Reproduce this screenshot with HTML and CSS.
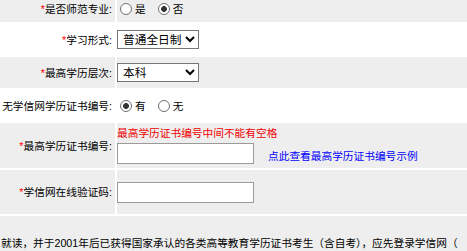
FILE: index.html
```html
<html>
<head>
<meta charset="utf-8">
<link rel="stylesheet" href="styles.css">
</head>
<body>
<form class="regform">
	<div class="lbl gray"><span><em class="req">*</em>是否师范专业:</span></div>
	<div class="val gray">
		<label class="opt"><input type="radio" name="shifan">是</label>
		<label class="opt"><input type="radio" name="shifan" checked>否</label>
	</div>

	<div class="lbl"><span><em class="req">*</em>学习形式:</span></div>
	<div class="val">
		<select class="pick" name="xxxs">
			<option>普通全日制</option>
			<option>成人教育</option>
			<option>自学考试</option>
		</select>
	</div>

	<div class="lbl gray"><span><em class="req">*</em>最高学历层次:</span></div>
	<div class="val gray">
		<select class="pick" name="xlcc">
			<option>本科</option>
			<option>专科</option>
			<option>研究生</option>
		</select>
	</div>

	<div class="lbl"><span>无学信网学历证书编号:</span></div>
	<div class="val">
		<label class="opt"><input type="radio" name="xxw" checked>有</label>
		<label class="opt"><input type="radio" name="xxw">无</label>
	</div>

	<div class="lbl gray"><span><em class="req">*</em>最高学历证书编号:</span></div>
	<div class="val gray stack">
		<div class="warn">最高学历证书编号中间不能有空格</div>
		<div class="line">
			<input type="text" class="box" name="zsbh">
			<a class="sample" href="#">点此查看最高学历证书编号示例</a>
		</div>
	</div>

	<div class="lbl gray"><span><em class="req">*</em>学信网在线验证码:</span></div>
	<div class="val gray">
		<input type="text" class="box" name="yzm">
	</div>

	<div class="note gray">就读，并于2001年后已获得国家承认的各类高等教育学历证书考生（含自考），应先登录学信网（</div>
</form>
</body>
</html>
```

FILE: styles.css
```css
body {
	margin: 0;
	background: #fff;
	font-family: "Liberation Sans", "Noto Sans CJK SC", sans-serif;
	font-size: 10.7px;
	color: #000;
	overflow: hidden;
}

.regform {
	display: grid;
	grid-template-columns: 115px 1fr;
	grid-template-rows: 27px 31px 31px 31px 45px 44px auto;
	gap: 2px;
	margin-top: -5px;
	background: #fff;
}

.gray {
	background: #eeeeee;
}

.lbl {
	display: flex;
	justify-content: flex-end;
	align-items: center;
	padding-right: 3px;
	white-space: nowrap;
	overflow: hidden;
	line-height: 14px;
}

.req {
	font-style: normal;
	color: #f00;
}

.val {
	display: flex;
	align-items: center;
	white-space: nowrap;
	line-height: 14px;
}

.val.stack {
	flex-direction: column;
	align-items: flex-start;
	justify-content: flex-start;
	padding-top: 3px;
}

.opt {
	display: flex;
	align-items: center;
	margin-right: 9px;
}

.opt input {
	-webkit-appearance: none;
	appearance: none;
	width: 12px;
	height: 12px;
	margin: 1px 3px 0 3px;
	border: 1px solid #707070;
	border-radius: 50%;
	background: #fff;
}

.opt input:checked {
	background: radial-gradient(circle, #333 2.6px, #fff 3.2px);
}

.pick {
	width: 82px;
	height: 19px;
	margin: 0;
	padding: 0 0 0 1px;
	border: 1px solid #767676;
	border-radius: 0;
	background: #fff;
	font-family: "Liberation Sans", "Noto Sans CJK SC", sans-serif;
	font-size: 11.7px;
	color: #000;
}

.warn {
	color: #e00;
	height: 14px;
	margin-bottom: 3px;
}

.line {
	display: flex;
	align-items: flex-end;
}

.box {
	width: 137px;
	height: 21px;
	margin: 0;
	padding: 0 2px;
	border: 1px solid #9a9a9a;
	background: #fff;
	box-sizing: border-box;
}

.sample {
	margin-left: 14px;
	color: #00f;
	text-decoration: none;
	line-height: 14px;
	padding-bottom: 1px;
}

.note {
	grid-column: 1 / -1;
	padding: 19px 0 0 1px;
	line-height: 16px;
	white-space: nowrap;
	overflow: hidden;
}
```
